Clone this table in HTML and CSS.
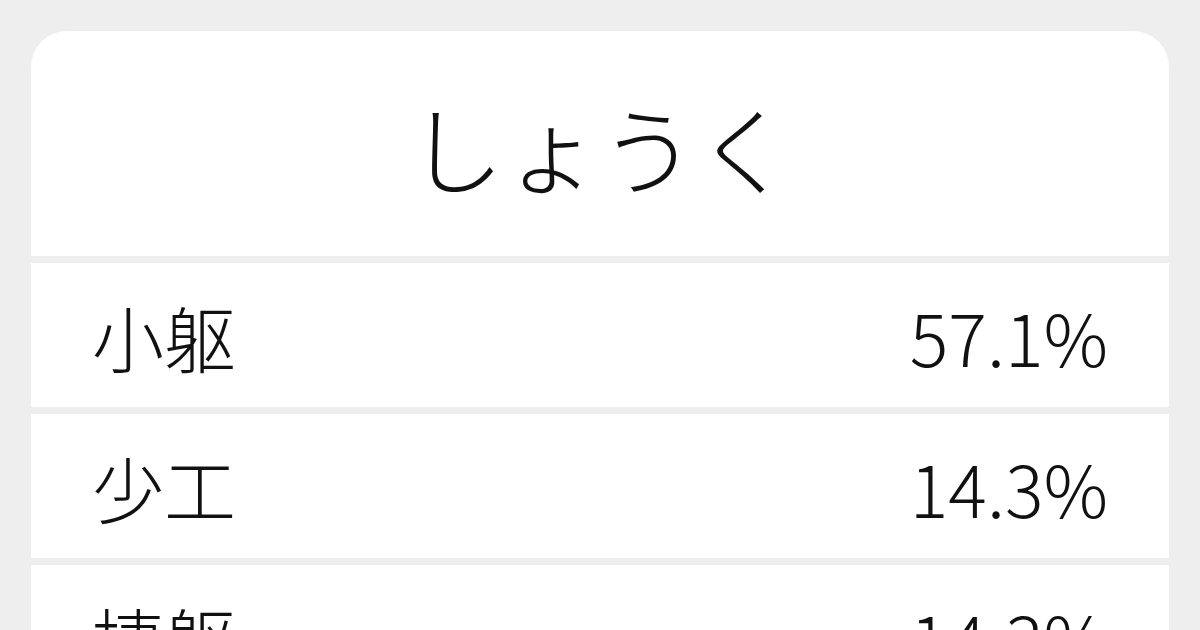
FILE: index.html
```html
<!DOCTYPE html>
<html lang="ja">
<head>
<meta charset="UTF-8">
<title>しょうく</title>
<link rel="stylesheet" href="styles.css">
</head>
<body>
<div class="card">
  <div class="reading">しょうく</div>
  <div class="row">
    <span class="word">小躯</span>
    <span class="rate">57.1%</span>
  </div>
  <div class="row">
    <span class="word">少工</span>
    <span class="rate">14.3%</span>
  </div>
  <div class="row">
    <span class="word">捷躯</span>
    <span class="rate">14.3%</span>
  </div>
</div>
</body>
</html>
```

FILE: styles.css
```css
body {
  margin: 0;
  padding: 31px 31px 0;
  background-color: #eeeeee;
  font-family: "Noto Sans CJK JP", "Noto Sans", sans-serif;
  font-weight: 300;
  color: #111111;
  height: 630px;
  box-sizing: border-box;
  overflow: hidden;
}

.card {
  display: flex;
  flex-direction: column;
  gap: 7px;
  border-radius: 36px 36px 0 0;
  overflow: hidden;
}

.reading {
  height: 225px;
  background-color: #ffffff;
  display: flex;
  justify-content: center;
  align-items: center;
  font-size: 96px;
  padding-top: 4px;
  box-sizing: border-box;
}

.row {
  height: 144px;
  flex-shrink: 0;
  background-color: #ffffff;
  display: flex;
  justify-content: space-between;
  align-items: center;
  padding: 0 61px;
  font-size: 72px;
}
```
